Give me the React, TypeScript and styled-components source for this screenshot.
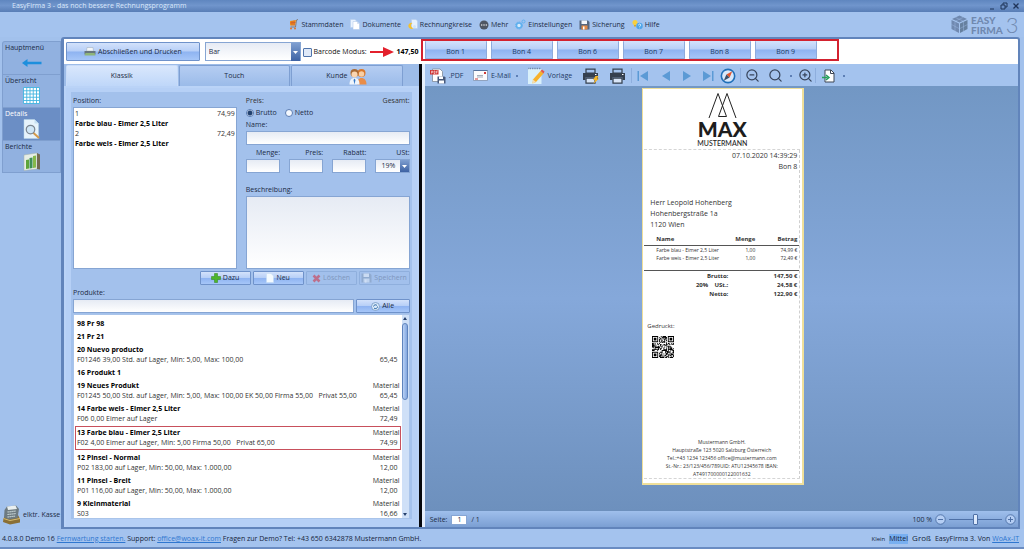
import React from "react";
import styled, { createGlobalStyle, css } from "styled-components";
import { Search, ZoomIn, ZoomOut } from "lucide-react";

const Global = createGlobalStyle`
  * { box-sizing: border-box; }
  html, body { margin: 0; padding: 0; }
  body { background: #a4c3ee; color: #1b2b45; }
  body, button, input, select, textarea {
    font-family: "Open Sans", "Noto Sans", sans-serif;
    font-size: 7px;
    line-height: 10px;
  }
  button, input, select, textarea { margin: 0; color: inherit; border-radius: 0; }
  button { padding: 0; border: 0; background: none; }
  svg { display: block; flex: none; }
`;

const gloss = "linear-gradient(#d3e2fb 0%, #b7cff7 48%, #8eb3f1 52%, #a6c6f8 100%)";
const fieldFill = "linear-gradient(#e6ebf4, #ffffff)";

/* ---------- frame ---------- */

const Shell = styled.div`
  display: grid;
  grid-template-rows: 12px 25px minmax(0, 1fr) 20px;
  height: 100vh;
  min-width: 900px;
`;

const TitleBar = styled.header`
  display: flex;
  justify-content: space-between;
  align-items: center;
  padding: 0 4px 0 12px;
  background: linear-gradient(#5f86bf, #7095cc 45%, #587db5);
  color: #dbe8fb;
`;

const WindowButtons = styled.div`
  display: flex;
  gap: 4px;
`;

const MenuBar = styled.div`
  display: flex;
  align-items: center;
  background: #a4c3ee;
`;

const Menu = styled.nav`
  flex: 1;
  display: flex;
  justify-content: center;
  gap: 7px;
`;

const MenuItem = styled.button`
  display: flex;
  align-items: center;
  gap: 2px;
`;

const Brand = styled.div`
  display: flex;
  align-items: center;
  gap: 3px;
  width: 76px;
  padding-left: 3px;
  color: #7089b0;
`;

const BrandWords = styled.div`
  font: 900 10px/10px Lato, sans-serif;
`;

const BrandDigit = styled.div`
  font: 300 22px/20px Lato, sans-serif;
`;

const Main = styled.div`
  display: grid;
  grid-template-columns: 61px minmax(0, 1fr) 4px;
  background: #a2c1ec;
`;

const Sidebar = styled.aside`
  display: flex;
  flex-direction: column;
  justify-content: space-between;
  padding: 4px 0 4px 2px;
`;

const SideTabs = styled.nav`
  display: flex;
  flex-direction: column;
`;

const SideTab = styled.button<{ $active?: boolean }>`
  display: flex;
  flex-direction: column;
  align-items: center;
  height: 33px;
  padding: 1px 2px 0;
  border: 1px solid #7f9fcf;
  border-bottom-width: 0;
  background: ${(p) => (p.$active ? "#6b8ec5" : "#91b1e0")};
  color: ${(p) => (p.$active ? "#ffffff" : "inherit")};
  &:first-child { border-radius: 3px 0 0 0; }
  &:last-child { border-bottom-width: 1px; }
  span { align-self: flex-start; }
`;

const Register = styled.button`
  display: flex;
  align-items: center;
  gap: 2px;
  white-space: nowrap;
`;

const Workspace = styled.main`
  display: grid;
  grid-template-rows: 25px minmax(0, 1fr);
  min-height: 0;
  border: 2px solid #6184bb;
  border-left-width: 3px;
  border-radius: 3px 3px 0 0;
  background: #ffffff;
`;

const Split = styled.div`
  display: grid;
  grid-template-columns: minmax(0, 355fr) 6px minmax(0, 594fr);
  min-height: 0;
`;

const Divider = styled.div`
  border-left: 3px solid #05070c;
  background: #e6effc;
`;

/* ---------- shared controls ---------- */

const GlossButton = styled.button`
  display: flex;
  justify-content: center;
  align-items: center;
  gap: 2px;
  height: 14px;
  border: 1px solid #6f92ca;
  border-radius: 1px;
  background: ${gloss};
  &:disabled {
    color: #7f97bd;
    border-color: #8fafdd;
    background: #a2c0ec;
  }
  &:disabled svg { opacity: 0.5; }
`;

const fieldBox = css`
  border: 1px solid #86a5d3;
  background: ${fieldFill};
`;

const TextField = styled.input`
  ${fieldBox}
  width: 100%;
  height: 14px;
  padding: 0 2px;
`;

const SelectBox = styled.div<{ $arrow: number }>`
  position: relative;
  display: flex;
  svg {
    position: absolute;
    top: 1px;
    right: 1px;
    width: ${(p) => p.$arrow}px;
    height: calc(100% - 2px);
    background: linear-gradient(#7f9fd0, #3d62a3);
    pointer-events: none;
  }
  select {
    ${fieldBox}
    width: 100%;
    padding: 0 ${(p) => p.$arrow + 2}px 0 3px;
    appearance: none;
  }
`;

const Select = ({ id, value, arrow, label }: { id: string; value: string; arrow: number; label?: string }) => (
  <SelectBox $arrow={arrow}>
    <select id={id} aria-label={label} defaultValue={value}>
      <option>{value}</option>
    </select>
    <svg viewBox="0 0 9 9" aria-hidden="true">
      <path d="M2 3.500h5L4.500 6.500z" fill="#fff" />
    </svg>
  </SelectBox>
);

const CheckBox = styled.input`
  appearance: none;
  width: 9px;
  height: 9px;
  border: 1px solid #4f74ab;
  border-radius: 1px;
  background: #dfe9f8;
`;

const Radio = styled.input`
  appearance: none;
  width: 8px;
  height: 8px;
  border: 1px solid #5b7db3;
  border-radius: 50%;
  background: #f4f8fe;
  &:checked { background: radial-gradient(#21416f 0 2px, #e4edfb 3px); }
`;

/* ---------- top strip ---------- */

const ActionStrip = styled.div`
  display: grid;
  grid-template-columns: 134fr 97fr auto;
  gap: 5px;
  padding: 3px 0 2px 2px;
  ${GlossButton} { height: 19px; }
  select { height: 19px; }
`;

const BarcodeMode = styled.div`
  display: flex;
  align-items: center;
  gap: 3px;
  margin-left: -3px;
  color: #111;
  label { display: flex; align-items: center; gap: 1px; }
`;

const Strong = styled.b`
  color: #000;
  white-space: nowrap;
`;

const BonStripHolder = styled.div`
  grid-column: 2 / 4;
  display: flex;
  align-items: flex-start;
  padding-left: 2px;
`;

const BonStrip = styled.div`
  display: flex;
  gap: 4px;
  padding: 0 20px 0 2px;
  border: 2px solid #d3222f;
`;

const BonButton = styled(GlossButton)`
  width: 62px;
  height: 18px;
  padding-top: 4px;
  border-color: #8eabdc;
  border-top: 0;
  color: #223a63;
`;

/* ---------- left form ---------- */

const LeftPanel = styled.section`
  display: grid;
  grid-template-rows: 22px minmax(0, 1fr);
  min-height: 0;
  background: #9dbce8;
`;

const Tabs = styled.div`
  display: flex;
  gap: 1px;
  padding: 1px 16px 0 2px;
`;

const Tab = styled.button<{ $active?: boolean }>`
  flex: 1;
  display: flex;
  justify-content: center;
  align-items: center;
  gap: 2px;
  border: 1px solid #7e9fd2;
  border-bottom: 0;
  border-radius: 2px 2px 0 0;
  background: ${(p) => (p.$active ? "linear-gradient(#d9e7fc, #bfd7f9)" : "linear-gradient(#b5cdf2, #9bbbe9)")};
  ${(p) => p.$active && "border-color: #c9dcf8;"}
`;

const TabBody = styled.div`
  display: flex;
  flex-direction: column;
  min-height: 0;
  padding: 4px 5px 8px;
  border: 2px solid #bad3f7;
  border-width: 2px 2px 0;
  background: #b6d0f6;
`;

const Form = styled.div`
  flex: 1;
  display: flex;
  flex-direction: column;
  min-height: 0;
  padding: 4px 2px 0;
  background: #a3c1ec;
  > label { padding-bottom: 1px; }
`;

const EntryGrid = styled.div`
  display: grid;
  grid-template-columns: 1fr 1fr;
  gap: 9px;
  height: 173px;
`;

const PositionColumn = styled.div`
  display: flex;
  flex-direction: column;
  gap: 1px;
`;

const PositionList = styled.ul`
  flex: 1;
  margin: 0;
  padding: 1px;
  list-style: none;
  border: 1px solid #86a5d3;
  background: #fff;
`;

const Pair = styled.div`
  display: flex;
  justify-content: space-between;
  white-space: pre;
  color: #333;
  b { color: #000; }
`;

const Fields = styled.div`
  display: flex;
  flex-direction: column;
  > label { padding-bottom: 1px; }
`;

const RadioRow = styled.div`
  display: flex;
  gap: 8px;
  height: 14px;
  label { display: flex; align-items: center; gap: 2px; }
`;

const NumberRow = styled.div`
  display: grid;
  grid-template-columns: repeat(4, 1fr);
  gap: 9px;
  padding: 3px 0 12px;
  label { display: block; text-align: right; padding-bottom: 1px; }
  select { height: 14px; padding-left: 5px; }
`;

const Description = styled.textarea`
  ${fieldBox}
  flex: 1;
  width: 100%;
  resize: none;
`;

const ButtonRow = styled.div`
  display: grid;
  grid-template-columns: repeat(4, 51px);
  gap: 2px;
  justify-content: end;
  padding: 2px 0 3px;
`;

const SearchRow = styled.div`
  display: grid;
  grid-template-columns: 1fr 54px;
  gap: 2px;
  padding-bottom: 1px;
`;

const ProductBox = styled.div`
  flex: 1;
  display: grid;
  grid-template-columns: 1fr 7px;
  min-height: 0;
  background: #fff;
  border: 1px solid #a9c4ea;
  overflow: hidden;
`;

const ProductList = styled.ul`
  margin: 0;
  padding: 2px 1px 0;
  list-style: none;
  min-height: 0;
  overflow: hidden;
`;

const Product = styled.li<{ $selected?: boolean }>`
  padding: 1px 0 1px 1px;
  border: 1px solid ${(p) => (p.$selected ? "#c8505c" : "transparent")};
  margin-bottom: -1px;
  ${(p) => p.$selected && "margin: 1px 0;"}
`;

const Amount = styled.span`
  padding-right: 2px;
`;

const ScrollTrack = styled.div`
  display: flex;
  flex-direction: column;
  align-items: center;
  background: #cfe0f7;
`;

const ScrollThumb = styled.div`
  width: 6px;
  height: 77px;
  margin-bottom: auto;
  border: 1px solid #5f84bd;
  border-radius: 3px;
  background: linear-gradient(90deg, #b9d1f5, #83a7df);
`;

/* ---------- preview ---------- */

const Preview = styled.section`
  display: grid;
  grid-template-rows: 22px minmax(0, 1fr) 16px;
  min-height: 0;
`;

const Toolbar = styled.div`
  display: flex;
  align-items: center;
  padding: 1px 0 0 5px;
  background: #a4c3ee;
  color: #223a63;
`;

const Tool = styled.button<{ $w?: number }>`
  display: flex;
  align-items: center;
  justify-content: center;
  gap: 3px;
  width: ${(p) => (p.$w ? `${p.$w}px` : "auto")};
  margin-right: ${(p) => (p.$w ? 0 : 7)}px;
`;

const MoreDot = styled.button`
  width: 8px;
  &::before {
    content: "";
    display: block;
    width: 2px;
    height: 2px;
    margin: 0 auto;
    background: #5d7fb5;
  }
`;

const Rule = styled.span`
  width: 1px;
  height: 15px;
  background: #8eaedd;
`;

const Canvas = styled.div`
  display: flex;
  justify-content: center;
  align-items: flex-start;
  min-height: 0;
  padding: 2px 0 0 4px;
  background: linear-gradient(#7297c4, #85a8da 50%, #6d90bd);
  overflow: hidden;
`;

const Receipt = styled.article`
  display: flex;
  flex-direction: column;
  width: 162px;
  min-height: 397px;
  padding: 1px 2px 4px 1px;
  border: 2px solid #efdf9a;
  border-width: 1px 2px 2px 1px;
  background: #fff;
  color: #333;
  font-size: 5px;
`;

const ReceiptHead = styled.div`
  display: flex;
  flex-direction: column;
  align-items: center;
  height: 60px;
  padding-top: 2px;
  border-bottom: 1px dashed #d5d5d5;
  color: #1d1d1d;
`;

const LogoName = styled.div`
  font: 900 21px/19px Lato, sans-serif;
`;

const LogoSub = styled.div`
  font: 500 7px/10px Lato, sans-serif;
`;

const ReceiptBody = styled.div`
  flex: 1;
  display: flex;
  flex-direction: column;
  border-right: 1px dashed #cfcfcf;
  border-bottom: 1px dashed #d5d5d5;
`;

const ReceiptMeta = styled.div`
  padding: 0 2px 0 6px;
  font-size: 7px;
  line-height: 11px;
  div { text-align: right; }
  address { padding-top: 25px; font-style: normal; }
`;

const ReceiptTable = styled.table`
  width: 100%;
  margin-top: 5px;
  border-collapse: collapse;
  table-layout: fixed;
  line-height: 8px;
  th { font-size: 6px; line-height: 9px; text-align: right; padding: 0 0 1px; border-bottom: 1px solid #555; }
  th:nth-child(1) { width: 84px; }
  th:nth-child(2) { width: 27px; }
  td { text-align: right; padding: 0; white-space: nowrap; }
  th:first-child, td:first-child { text-align: left; padding-left: 12px; }
  th:last-child, td:last-child { padding-right: 2px; }
  tbody tr:last-child td { padding-bottom: 8px; border-bottom: 1px solid #555; }
  tfoot td { font-size: 6px; font-weight: 700; line-height: 9px; }
  tfoot td:first-child { text-align: right; }
  tfoot tr:first-child td { padding-top: 1px; }
`;

const Printed = styled.div`
  padding: 22px 0 5px 3px;
  font-size: 6px;
`;

const QrHolder = styled.div`
  padding-left: 8px;
`;

const ReceiptFoot = styled.footer`
  margin-top: auto;
  line-height: 8px;
  text-align: center;
`;

const PageBar = styled.div`
  display: flex;
  align-items: center;
  gap: 4px;
  padding: 1px 2px 0 5px;
  background: linear-gradient(#9fbfec, #7b9fd3);
  input[type="text"] {
    width: 16px;
    height: 10px;
    padding: 0;
    border: 1px solid #86a5d3;
    background: #fff;
    text-align: center;
  }
`;

const ZoomGroup = styled.div`
  display: flex;
  align-items: center;
  gap: 3px;
  margin-left: auto;
`;

const ZoomSlider = styled.input`
  appearance: none;
  width: 53px;
  height: 12px;
  background: linear-gradient(#4e70a6, #4e70a6) center / 100% 1px no-repeat;
  &::-webkit-slider-thumb {
    appearance: none;
    width: 5px;
    height: 11px;
    border: 1px solid #4e70a6;
    border-radius: 1px;
    background: #dce9fc;
  }
`;

/* ---------- status ---------- */

const StatusBar = styled.footer`
  display: flex;
  justify-content: space-between;
  align-items: center;
  padding: 1px 5px 0 2px;
  border-bottom: 2px solid #6a8cc2;
  background: #a4c3ee;
  color: #15233b;
  a { color: #2f77d0; }
`;

const SizeButton = styled.button<{ $size: number; $on?: boolean }>`
  font-size: ${(p) => p.$size}px;
  margin-right: 4px;
  background: ${(p) => (p.$on ? "#78aff0" : "none")};
`;

/* ---------- icons ---------- */

const Svg = ({ w, h = w, box, children }: { w: number; h?: number; box: string; children: React.ReactNode }) => (
  <svg width={w} height={h} viewBox={box} fill="none" aria-hidden="true">
    {children}
  </svg>
);

const CartIcon = () => (
  <Svg w={11} box="0 0 22 22">
    <path d="M20 1l-3 1-2 14H5" stroke="#7d6a5a" strokeWidth="1.6" />
    <path d="M4 4l12-2-2 11H4z" fill="#f0951e" />
    <path d="M4 8l11-1M8 4v9M12 3v10" stroke="#c9482a" strokeWidth="1.2" />
    <circle cx="6" cy="19" r="2" fill="#e0762a" /><circle cx="14" cy="19" r="2" fill="#e0762a" />
  </Svg>
);
const DocsIcon = () => (
  <Svg w={10} h={11} box="0 0 20 22">
    <path d="M1 1h9l3 3v13H1z" fill="#e9f3ff" stroke="#b3cbe9" />
    <path d="M6 5h9l4 4v12H6z" fill="#fff" stroke="#a9c3e6" /><path d="M15 5v4h4" stroke="#a9c3e6" />
  </Svg>
);
const CirclesIcon = () => (
  <Svg w={10} h={11} box="0 0 20 22">
    <path d="M7 1h9l3 3v15H7z" fill="#e7f1fd" stroke="#b3cbe9" />
    <path d="M9 8a6 6 0 1 0 2 10c-3 0-5-2-5-5 0-2 1-4 3-5z" fill="#f6c12e" />
    <circle cx="13" cy="15" r="3" fill="#cfe3fa" />
  </Svg>
);
const MoreIcon = () => (
  <Svg w={10} box="0 0 20 20">
    <circle cx="10" cy="10" r="9" fill="#4f5663" />
    <g fill="#fff"><circle cx="5.5" cy="10" r="1.4" /><circle cx="10" cy="10" r="1.4" /><circle cx="14.500" cy="10" r="1.4" /></g>
  </Svg>
);
const GearIcon = () => (
  <Svg w={11} box="0 0 22 22">
    <circle cx="8" cy="13" r="5" stroke="#5fb0ee" strokeWidth="3" fill="#d6ebfd" />
    <circle cx="8" cy="13" r="7" stroke="#5fb0ee" strokeWidth="2" strokeDasharray="2.500 2" />
    <circle cx="17" cy="5" r="3" stroke="#5fb0ee" strokeWidth="2" />
  </Svg>
);
const SaveIcon = ({ muted }: { muted?: boolean }) => (
  <Svg w={11} h={10} box="0 0 22 20">
    <path d="M1 1h17l3 3v15H1z" fill={muted ? "#8097b5" : "#56677f"} />
    <path d="M5 1h11v7H5z" fill="#f3f6fb" /><path d="M5 11h12v8H5z" fill={muted ? "#dfe8f4" : "#e48a45"} />
    <path d="M8 13h3v6H8z" fill="#fff" />
  </Svg>
);
const HelpIcon = () => (
  <Svg w={11} box="0 0 22 22">
    <circle cx="6" cy="7" r="5" fill="#f9cf3d" /><path d="M4 12h4v3H4z" fill="#d8a92a" />
    <circle cx="15" cy="14" r="6.500" fill="#4ea5ea" />
    <path d="M13 12.500c0-3 4.500-3 4.500-.3 0 1.600-2.300 1.700-2.300 3.300M15.200 17.500v1" stroke="#fff" strokeWidth="1.500" />
  </Svg>
);
const CubeIcon = () => (
  <Svg w={17} h={19} box="0 0 34 38">
    <path d="M17 1l15 7-15 7L2 8z" fill="#6f88ae" /><path d="M1 10l15 7v19L1 28z" fill="#7089b0" />
    <path d="M33 10l-15 7v19l15-8z" fill="#66809f" />
    <path d="M9 5l15 7M24 5L9 12M8 14v18M1 19l15 8M25 14v18M33 19l-15 8" stroke="#a4c3ee" strokeWidth=".8" />
  </Svg>
);
const ArrowLeftIcon = () => (
  <Svg w={20} h={19} box="0 0 40 38">
    <path d="M0 20l11-8v5.500h28v5H11V28z" fill="#1d8fdd" />
  </Svg>
);
const GridIcon = () => (
  <Svg w={17} h={19} box="0 -2 34 38">
    <path d="M1 1h32v32H1z" fill="#fff" />
    <path d="M1 1h32v32H1zM7.500 1v32M14 1v32M20.500 1v32M27 1v32M1 7.500h32M1 14h32M1 20.500h32M1 27h32" stroke="#43b4e0" strokeWidth="1.800" />
  </Svg>
);
const DetailIcon = () => (
  <Svg w={17} h={20} box="0 0 34 40">
    <path d="M2 1h21l8 8v30H2z" fill="#e6f3fc" stroke="#b4d4ea" /><path d="M23 1v8h8" fill="#c7e1f2" />
    <path d="M21 28l10 9" stroke="#d49a4b" strokeWidth="4" strokeLinecap="round" />
    <circle cx="15" cy="21" r="8.500" fill="#cfe6f7" stroke="#7d8792" strokeWidth="2.500" />
  </Svg>
);
const ReportIcon = () => (
  <Svg w={18} h={20} box="0 0 36 40">
    <path d="M2 6l26-4v32L2 37z" fill="#e7eee6" stroke="#a5b1a8" /><path d="M28 2l6 3v30l-6-1z" fill="#746a52" />
    <path d="M6 16l6-1v18l-6 1z" fill="#5da53a" /><path d="M13 12l6-1v21l-6 1z" fill="#3f8f57" /><path d="M20 8l6-1v24l-6 1z" fill="#86b94a" />
  </Svg>
);
const RegisterIcon = () => (
  <Svg w={19} h={20} box="0 0 38 40">
    <path d="M3 27l6-10 20-3 7 14v7L16 39 2 34z" fill="#8a6f35" />
    <path d="M3 27l13 4 20-4" stroke="#d6bd74" strokeWidth="2" />
    <path d="M5 10l5-7 18-2 6 7-3 18-17 3-10-4z" fill="#6d7a80" />
    <path d="M10 3l17-2 3 7-18 2z" fill="#e9eff0" /><path d="M11 14l17-2M11 19l17-2M11 24l16-2" stroke="#d6e4e4" strokeWidth="2.500" strokeDasharray="2.500 1.500" />
  </Svg>
);
const GreenPrinterIcon = () => (
  <Svg w={12} h={9} box="0 0 24 18">
    <path d="M6 1h12l1 7H5z" fill="#f4f7fa" stroke="#9aa8b5" /><path d="M1 8h22v7H1z" fill="#66757e" />
    <path d="M3 12h18l2 5H1z" fill="#8fb57a" />
  </Svg>
);
const PeopleIcon = () => (
  <Svg w={18} h={17} box="0 0 36 34">
    <circle cx="25" cy="10" r="8" fill="#d9772a" /><circle cx="25" cy="12" r="5.500" fill="#f8cfa5" />
    <path d="M16 33c0-9 4-13 9-13s10 4 10 13z" fill="#e98d49" />
    <circle cx="11" cy="10" r="8" fill="#a86a35" /><circle cx="11" cy="13" r="6" fill="#fbd5b0" />
    <path d="M1 33c0-9 4-13 10-13s10 4 10 13z" fill="#eef4fb" /><path d="M11 21l2 3-2 9-2-9z" fill="#3577c6" />
  </Svg>
);
const PlusIcon = () => (
  <Svg w={10} box="0 0 20 20"><path d="M7 1h6v6h6v6h-6v6H7v-6H1V7h6z" fill="#4db52b" stroke="#2f8217" /></Svg>
);
const PageIcon = () => (
  <Svg w={8} h={10} box="0 0 16 20"><path d="M1 1h9l5 5v13H1z" fill="#f3faff" stroke="#c4dcf2" /></Svg>
);
const CrossIcon = () => (
  <Svg w={9} box="0 0 18 18"><path d="M3 3l12 12M15 3L3 15" stroke="#d8202f" strokeWidth="5" /></Svg>
);
const RefreshIcon = () => (
  <Svg w={9} box="0 0 18 18">
    <circle cx="9" cy="9" r="8" fill="#dbeafa" stroke="#6f93bd" strokeWidth="1.500" />
    <path d="M5 9a4 4 0 0 1 7-2M13 9a4 4 0 0 1-7 3" stroke="#356fa9" strokeWidth="2" />
  </Svg>
);
const PdfIcon = () => (
  <Svg w={16} box="0 0 32 32">
    <path d="M5 2h15l5 5v20H5z" fill="#fff" stroke="#7b8491" strokeWidth="1.500" />
    <path d="M0 4h17v9H0z" fill="#cf3434" />
    <path d="M3 11V6h2v3H3M8 6v5h2V6zM13 11V6h3M13 8.500h2" stroke="#fff" />
    <path d="M15 17h14l2 2v12H15z" fill="#46587a" /><path d="M18 17h8v5h-8zM18 25h10v6H18z" fill="#fff" />
  </Svg>
);
const MailIcon = () => (
  <Svg w={15} h={11} box="0 0 30 22">
    <path d="M1 1h28v20H1z" fill="#fbfbfd" stroke="#7c8ea9" strokeWidth="1.500" />
    <path d="M1 1h28" stroke="#54719d" strokeWidth="2" /><path d="M22 4h4v4h-4z" fill="#cf3a3a" />
    <path d="M8 11h12M8 14h12" stroke="#8b95a5" strokeWidth="1.500" /><path d="M4 18h6" stroke="#cf3a3a" strokeWidth="2" />
  </Svg>
);
const NoteIcon = () => (
  <Svg w={18} h={18} box="0 0 36 36">
    <path d="M2 4h27v30H2z" fill="#d9f0fb" /><path d="M3 3h25" stroke="#6a7b90" strokeWidth="3" strokeDasharray="1.500 2" />
    <path d="M27 8l6 5-15 17-7 3 1-8z" fill="#f7b22b" /><path d="M27 8l6 5 2-4-5-4z" fill="#e3574a" />
    <path d="M12 25l-1 8 7-3z" fill="#f5dcb0" />
  </Svg>
);
const PrinterIcon = ({ bolt }: { bolt?: boolean }) => (
  <Svg w={17} h={16} box="0 0 34 32">
    <path d="M8 2h18v8H8z" stroke="#35404f" strokeWidth="2.500" />
    <path d="M2 10h30v14h-5v-5H7v5H2z" fill="#35404f" /><path d="M8 20h18v10H8z" fill="#d9e6f8" stroke="#35404f" strokeWidth="2.500" />
    <path d="M26 13h3" stroke="#fff" strokeWidth="2" />
    {bolt && <path d="M27 16h6l-3 5h4L23 32l3-8h-4z" fill="#f4b62a" />}
  </Svg>
);
const NavIcon = ({ flip, bar }: { flip?: boolean; bar?: boolean }) => (
  <Svg w={13} h={12} box="0 0 26 24">
    <g transform={flip ? "matrix(-1 0 0 1 26 0)" : undefined} fill="#5b9ad5">
      <path d="M22 2v20L6 12z" />
      {bar && <path d="M1 2h3v20H1z" />}
    </g>
  </Svg>
);
const CompassIcon = () => (
  <Svg w={16} box="0 0 30 30">
    <circle cx="15" cy="15" r="12.500" fill="#d9e8fa" stroke="#1f6fb8" strokeWidth="3" />
    <path d="M23 6l-5 12-6-6z" fill="#e2552c" /><path d="M7 24l5-12 6 6z" fill="#3b4f68" />
  </Svg>
);
const ExportIcon = () => (
  <Svg w={13} h={14} box="0 0 26 28">
    <path d="M6 2h12l6 6v18H6z" fill="#fff" stroke="#3d4654" strokeWidth="2" /><path d="M17 2v7h7" stroke="#3d4654" strokeWidth="2" />
    <path d="M0 17h11M8 12l6 5-6 5" stroke="#24a05c" strokeWidth="3" />
  </Svg>
);
const RedArrow = () => (
  <Svg w={24} h={10} box="0 0 24 10"><path d="M0 4h13V0l11 5-11 5V6H0z" fill="#e3202c" /></Svg>
);
const PeaksLogo = () => (
  <Svg w={29} h={27} box="0 0 58 54">
    <path d="M2 52L20 3l17 46H21L38 3l18 49" stroke="#222" strokeWidth="2" />
  </Svg>
);
const RoundIcon = ({ plus }: { plus?: boolean }) => (
  <Svg w={11} box="0 0 22 22">
    <circle cx="11" cy="11" r="9.500" fill="#b5cef4" stroke="#4e70a6" strokeWidth="1.800" />
    <path d={plus ? "M6 11h10M11 6v10" : "M6 11h10"} stroke="#4e70a6" strokeWidth="2" />
  </Svg>
);

const finder = (x: number, y: number) => {
  const d = Math.max(Math.abs(x - 3), Math.abs(y - 3));
  return d === 3 || d <= 1;
};
const qrPath = () => {
  let d = "";
  let seed = 2463534;
  for (let y = 0; y < 25; y++) {
    for (let x = 0; x < 25; x++) {
      seed ^= seed << 13;
      seed ^= seed >>> 17;
      seed ^= seed << 5;
      const left = x < 8, top = y < 8, right = x > 16, bottom = y > 16;
      let on = (seed >>> 9) % 2 === 0;
      if (left && top) on = x < 7 && y < 7 && finder(x, y);
      else if (right && top) on = x > 17 && y < 7 && finder(x - 18, y);
      else if (left && bottom) on = x < 7 && y > 17 && finder(x, y - 18);
      if (on) d += `M${x} ${y}h1v1h-1z`;
    }
  }
  return d;
};
const QrCode = () => (
  <Svg w={22} box="0 0 25 25"><path d={qrPath()} fill="#000" /></Svg>
);

/* ---------- data ---------- */

const menu: [string, React.ReactNode][] = [
  ["Stammdaten", <CartIcon />],
  ["Dokumente", <DocsIcon />],
  ["Rechnungkreise", <CirclesIcon />],
  ["Mehr", <MoreIcon />],
  ["Einstellungen", <GearIcon />],
  ["Sicherung", <SaveIcon />],
  ["Hilfe", <HelpIcon />],
];

const sections: [string, React.ReactNode][] = [
  ["Hauptmenü", <ArrowLeftIcon />],
  ["Übersicht", <GridIcon />],
  ["Details", <DetailIcon />],
  ["Berichte", <ReportIcon />],
];

const bons = ["Bon 1", "Bon 4", "Bon 6", "Bon 7", "Bon 8", "Bon 9"];

type ProductRow = { title: string; kind?: string; info?: string; price?: string; selected?: boolean };
const products: ProductRow[] = [
  { title: "98 Pr 98" },
  { title: "21 Pr 21" },
  { title: "20 Nuevo producto", info: "F01246 39,00 Std. auf Lager, Min: 5,00, Max: 100,00", price: "65,45" },
  { title: "16 Produkt 1" },
  { title: "19 Neues Produkt", kind: "Material", info: "F01245 50,00 Std. auf Lager, Min: 5,00, Max: 100,00 EK 50,00 Firma 55,00   Privat 55,00", price: "65,45" },
  { title: "14 Farbe weis - Eimer 2,5 Liter", kind: "Material", info: "F06 0,00 Eimer auf Lager", price: "72,49" },
  { title: "13 Farbe blau - Eimer 2,5 Liter", kind: "Material", info: "F02 4,00 Eimer auf Lager, Min: 5,00 Firma 50,00   Privat 65,00", price: "74,99", selected: true },
  { title: "12 Pinsel - Normal", kind: "Material", info: "P02 183,00 auf Lager, Min: 50,00, Max: 1.000,00", price: "12,00" },
  { title: "11 Pinsel - Breit", kind: "Material", info: "P01 116,00 auf Lager, Min: 50,00, Max: 1.000,00", price: "12,00" },
  { title: "9 Kleinmaterial", kind: "Material", info: "S03", price: "16,66" },
];

/* ---------- page ---------- */

const EntryForm = () => (
  <LeftPanel>
    <Tabs role="tablist">
      <Tab role="tab" $active>Klassik</Tab>
      <Tab role="tab">Touch</Tab>
      <Tab role="tab">Kunde <PeopleIcon /></Tab>
    </Tabs>
    <TabBody>
      <Form>
        <EntryGrid>
          <PositionColumn>
            <div>Position:</div>
            <PositionList>
              <li><Pair><span>1</span><span>74,99</span></Pair><Pair><b>Farbe blau - Eimer 2,5 Liter</b></Pair></li>
              <li><Pair><span>2</span><span>72,49</span></Pair><Pair><b>Farbe weis - Eimer 2,5 Liter</b></Pair></li>
            </PositionList>
          </PositionColumn>
          <Fields>
            <Pair><span>Preis:</span><span>Gesamt:</span></Pair>
            <RadioRow>
              <label><Radio type="radio" name="preis" defaultChecked />Brutto</label>
              <label><Radio type="radio" name="preis" />Netto</label>
            </RadioRow>
            <label htmlFor="name">Name:</label>
            <TextField id="name" />
            <NumberRow>
              <div><label htmlFor="menge">Menge:</label><TextField id="menge" /></div>
              <div><label htmlFor="preis">Preis:</label><TextField id="preis" /></div>
              <div><label htmlFor="rabatt">Rabatt:</label><TextField id="rabatt" /></div>
              <div><label htmlFor="ust">USt:</label><Select id="ust" value="19%" arrow={9} /></div>
            </NumberRow>
            <label htmlFor="beschreibung">Beschreibung:</label>
            <Description id="beschreibung" />
          </Fields>
        </EntryGrid>
        <ButtonRow>
          <GlossButton><PlusIcon />Dazu</GlossButton>
          <GlossButton><PageIcon />Neu</GlossButton>
          <GlossButton disabled><CrossIcon />Löschen</GlossButton>
          <GlossButton disabled><SaveIcon muted />Speichern</GlossButton>
        </ButtonRow>
        <label htmlFor="produkte">Produkte:</label>
        <SearchRow>
          <TextField id="produkte" />
          <GlossButton><RefreshIcon />Alle</GlossButton>
        </SearchRow>
        <ProductBox>
          <ProductList>
            {products.map((p) => (
              <Product key={p.title} $selected={p.selected}>
                <Pair><b>{p.title}</b><span>{p.kind}</span></Pair>
                {p.info && <Pair><span>{p.info}</span><Amount>{p.price}</Amount></Pair>}
              </Product>
            ))}
          </ProductList>
          <ScrollTrack>
            <Svg w={8} box="0 0 8 8"><path d="M4 2l2 3H2z" fill="#26406c" /></Svg>
            <ScrollThumb />
            <Svg w={8} box="0 0 8 8"><path d="M4 6l2-3H2z" fill="#26406c" /></Svg>
          </ScrollTrack>
        </ProductBox>
      </Form>
    </TabBody>
  </LeftPanel>
);

const lens = { size: 15, color: "#37455c", strokeWidth: 2 };

const ReceiptPreview = () => (
  <Preview>
    <Toolbar>
      <Tool><PdfIcon />.PDF</Tool>
      <Tool $w={43}><MailIcon />E-Mail</Tool>
      <MoreDot aria-label="E-Mail Optionen" />
      <Tool $w={56}><NoteIcon />Vorlage</Tool>
      <Tool $w={26} aria-label="Schnelldruck"><PrinterIcon bolt /></Tool>
      <Tool $w={28} aria-label="Drucken"><PrinterIcon /></Tool>
      <Rule />
      <Tool $w={22} aria-label="Erste Seite"><NavIcon bar /></Tool>
      <Tool $w={22} aria-label="Zurück"><NavIcon /></Tool>
      <Tool $w={22} aria-label="Weiter"><NavIcon flip /></Tool>
      <Tool $w={18} aria-label="Letzte Seite"><NavIcon flip bar /></Tool>
      <Tool $w={24} aria-label="Navigation"><CompassIcon /></Tool>
      <Rule />
      <Tool $w={22} aria-label="Verkleinern"><ZoomOut {...lens} /></Tool>
      <Tool $w={24} aria-label="Zoom"><Search {...lens} /></Tool>
      <MoreDot aria-label="Zoom Optionen" />
      <Tool $w={20} aria-label="Vergrößern"><ZoomIn {...lens} /></Tool>
      <Rule />
      <Tool $w={24} aria-label="Exportieren"><ExportIcon /></Tool>
      <MoreDot aria-label="Export Optionen" />
    </Toolbar>
    <Canvas>
      <Receipt>
        <ReceiptHead>
          <PeaksLogo />
          <LogoName>MAX</LogoName>
          <LogoSub>MUSTERMANN</LogoSub>
        </ReceiptHead>
        <ReceiptBody>
          <ReceiptMeta>
            <div>07.10.2020 14:39:29</div>
            <div>Bon 8</div>
            <address>Herr Leopold Hohenberg<br />Hohenbergstraße 1a<br />1120 Wien</address>
          </ReceiptMeta>
          <ReceiptTable>
            <thead><tr><th>Name</th><th>Menge</th><th>Betrag</th></tr></thead>
            <tbody>
              <tr><td>Farbe blau - Eimer 2,5 Liter</td><td>1,00</td><td>74,99 €</td></tr>
              <tr><td>Farbe weis - Eimer 2,5 Liter</td><td>1,00</td><td>72,49 €</td></tr>
            </tbody>
            <tfoot>
              <tr><td>Brutto:</td><td /><td>147,50 €</td></tr>
              <tr><td>20%&nbsp;&nbsp;&nbsp; USt.:</td><td /><td>24,58 €</td></tr>
              <tr><td>Netto:</td><td /><td>122,90 €</td></tr>
            </tfoot>
          </ReceiptTable>
          <Printed>Gedruckt:</Printed>
          <QrHolder><QrCode /></QrHolder>
          <ReceiptFoot>
            Mustermann GmbH.<br />Hauptstraße 123 5020 Salzburg Österreich<br />
            Tel.:+43 1234 123456 office@mustermann.com<br />
            St.-Nr.: 23/123/456/789UID: ATU12345678 IBAN:<br />AT491700000122001632
          </ReceiptFoot>
        </ReceiptBody>
      </Receipt>
    </Canvas>
    <PageBar>
      <label htmlFor="seite">Seite:</label>
      <input type="text" id="seite" defaultValue="1" />
      <span>/ 1</span>
      <ZoomGroup>
        <span>100 %</span>
        <button aria-label="Kleiner"><RoundIcon /></button>
        <ZoomSlider type="range" aria-label="Zoomstufe" defaultValue={50} />
        <button aria-label="Größer"><RoundIcon plus /></button>
      </ZoomGroup>
    </PageBar>
  </Preview>
);

export default function App() {
  return (
    <>
      <Global />
      <Shell>
        <TitleBar>
          <span>EasyFirma 3 - das noch bessere Rechnungsprogramm</span>
          <WindowButtons>
            <button aria-label="Minimieren"><Svg w={8} box="0 0 8 8"><path d="M2 7h4" stroke="#1f3459" /></Svg></button>
            <button aria-label="Wiederherstellen"><Svg w={8} box="0 0 8 8"><path d="M3 3V1h4v4H5M1 3h4v4H1z" stroke="#1f3459" /></Svg></button>
            <button aria-label="Schließen"><Svg w={8} box="0 0 8 8"><path d="M1.500 1.500l5 5M6.500 1.500l-5 5" stroke="#1f3459" strokeWidth="1.300" /></Svg></button>
          </WindowButtons>
        </TitleBar>
        <MenuBar>
          <Menu>
            {menu.map(([label, icon]) => <MenuItem key={label}>{icon}{label}</MenuItem>)}
          </Menu>
          <Brand>
            <CubeIcon />
            <BrandWords>EASY<br />FIRMA</BrandWords>
            <BrandDigit>3</BrandDigit>
          </Brand>
        </MenuBar>
        <Main>
          <Sidebar>
            <SideTabs>
              {sections.map(([label, icon]) => (
                <SideTab key={label} $active={label === "Details"}><span>{label}</span>{icon}</SideTab>
              ))}
            </SideTabs>
            <Register><RegisterIcon />elktr. Kasse</Register>
          </Sidebar>
          <Workspace>
            <Split>
              <ActionStrip>
                <GlossButton><GreenPrinterIcon />Abschließen und Drucken</GlossButton>
                <Select id="zahlung" label="Zahlungsart" value="Bar" arrow={9} />
                <BarcodeMode>
                  <label><CheckBox type="checkbox" />Barcode Modus:</label>
                  <RedArrow />
                  <Strong>147,50</Strong>
                </BarcodeMode>
              </ActionStrip>
              <BonStripHolder>
                <BonStrip>
                  {bons.map((b) => <BonButton key={b}>{b}</BonButton>)}
                </BonStrip>
              </BonStripHolder>
            </Split>
            <Split>
              <EntryForm />
              <Divider />
              <ReceiptPreview />
            </Split>
          </Workspace>
        </Main>
        <StatusBar>
          <div>
            4.0.8.0 Demo 16 <a href="#fernwartung">Fernwartung starten.</a> Support:{" "}
            <a href="mailto:office@woax-it.com">office@woax-it.com</a> Fragen zur Demo? Tel: +43 650 6342878 Mustermann GmbH.
          </div>
          <div>
            <SizeButton $size={6}>Klein</SizeButton>
            <SizeButton $size={7} $on>Mittel</SizeButton>
            <SizeButton $size={8}>Groß</SizeButton>
            EasyFirma 3. Von <a href="#woax-it">WoAx-IT</a>
          </div>
        </StatusBar>
      </Shell>
    </>
  );
}
